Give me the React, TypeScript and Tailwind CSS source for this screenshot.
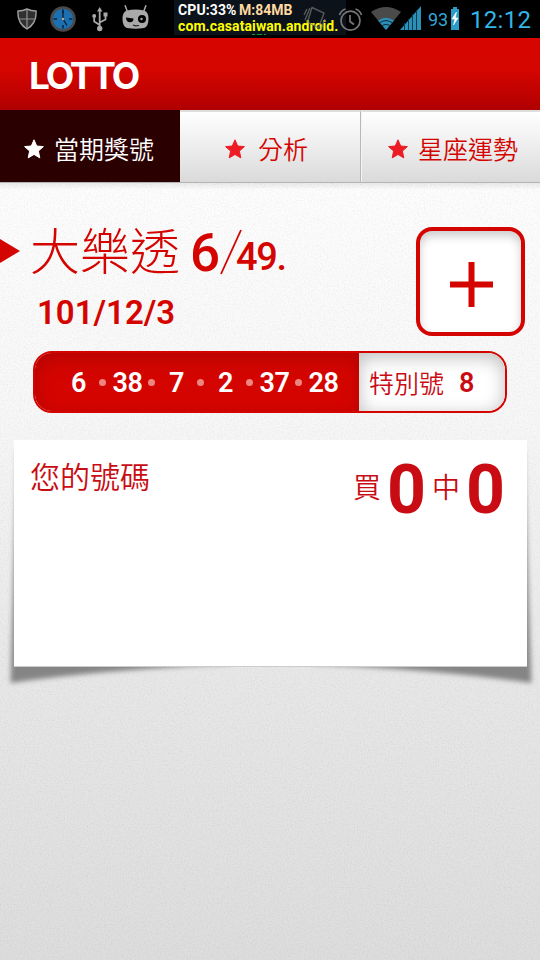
import React from 'react';

const CJK = "font-['Noto_Sans_CJK_TC','Noto_Sans',sans-serif]";
const ROBOTO = 'font-[Roboto,sans-serif]';

function Star({ className }: { className: string }) {
  return (
    <svg viewBox="0 0 20 20" className={className}>
      <path
        fill="currentColor"
        stroke="currentColor"
        strokeWidth="1"
        strokeLinejoin="round"
        d="M10 .8 12.7 7 19.4 7.6 14.4 12.1 15.8 18.9 10 15.4 4.2 18.9 5.6 12.1 .6 7.6 7.3 7Z"
      />
    </svg>
  );
}

function StatusBar() {
  return (
    <div className="relative flex h-[38px] items-start bg-black">
      <svg className="ml-[17px] mt-[8px] h-[22px] w-[20px] shrink-0" viewBox="0 0 20 22">
        <path d="M1 3Q6 3 10 1Q14 3 19 3Q20 15 10 21Q0 15 1 3Z" fill="#303030" stroke="#a0a0a0" strokeWidth="1.4" />
        <path d="M10 2V20M2 11H18" stroke="#909090" strokeWidth="1.2" />
      </svg>
      <svg className="ml-[13px] mt-[6px] h-[26px] w-[26px] shrink-0" viewBox="0 0 26 26">
        <circle cx="13" cy="13" r="11.5" fill="#1c70b0" stroke="#4a4a4a" strokeWidth="2.6" />
        <path d="M13 3.5V7M13 19V22.5M3.5 13H7M19 13H22.5" stroke="#0a2740" strokeWidth="1.6" />
        <path d="M13 4.500V13L17 19.500" stroke="#0b2033" strokeWidth="1.3" fill="none" />
        <circle cx="13" cy="13" r="1.2" fill="#b8a890" />
      </svg>
      <svg className="ml-[15px] mt-[7px] h-[25px] w-[18px] shrink-0" viewBox="0 0 18 25" fill="none" stroke="#a8a8a8" strokeWidth="1.8">
        <path d="M8.700 4V21M8.700 18L3.200 14.500V10M8.700 15.500L14.500 12.500V8" />
        <path d="M8.700 0L11.400 4.500H6Z" fill="#a8a8a8" stroke="none" />
        <circle cx="8.700" cy="21.500" r="2.700" fill="#a8a8a8" stroke="none" />
        <circle cx="3.200" cy="9" r="2" fill="#a8a8a8" stroke="none" />
        <path d="M12.500 5.500H16.500V9.500H12.500Z" fill="#a8a8a8" stroke="none" />
      </svg>
      <svg className="ml-[13px] mt-[5px] h-[25px] w-[27px] shrink-0" viewBox="0 0 27 25">
        <path d="M3 .3L5.500 7M24 .3L21.500 7" stroke="#aaa" strokeWidth="1.5" />
        <path d="M5 5.500Q13.500 3.500 22 5.500Q26.500 6.500 26.500 14Q26.500 21.500 22 23Q13.500 24.500 5 23Q.5 21.500 .5 14Q.5 6.500 5 5.500Z" fill="#aaa" />
        <path d="M4 12.500L11.500 13.500Q11.500 17.300 8 17.300Q4 17 4 12.500Z" fill="#000" />
        <circle cx="20" cy="14" r="4" fill="#000" />
        <circle cx="19.500" cy="14" r="1.200" fill="#aaa" />
        <path d="M11 20L13.500 20.800L17 20.500" stroke="#222" strokeWidth="1.200" fill="none" />
      </svg>
      <div className={`ml-[25px] h-[35px] w-[172px] shrink-0 overflow-hidden bg-[#0b1219] pl-[4px] text-[14px] font-bold leading-[16px] text-white ${ROBOTO}`}>
        <div className="whitespace-nowrap pt-[2px]">
          <span className="tracking-[.1px]">CPU:33%</span> <span className="-ml-[1px] text-[#ffd9a0]">M:84MB</span>
        </div>
        <div className="whitespace-nowrap tracking-[.1px] text-[#ffff00]">com.casataiwan.android.</div>
        <div className="ml-[74px] h-px w-[14px] bg-[linear-gradient(90deg,#0c9a35_0_3px,transparent_3px_5px,#0c9a35_5px_10px,transparent_10px_12px,#0c9a35_12px)]" />
      </div>
      <svg className="absolute left-[303px] top-[6px] h-[26px] w-[24px]" viewBox="0 0 24 26" fill="none" stroke="#777" strokeWidth="1.400" opacity=".7">
        <path d="M9 1.500L21 7L15.500 22L4.500 16Z" />
        <path d="M4 3L1 9M7 2L2 14M22 13L18 23" />
      </svg>
      <svg className="-ml-[8px] mt-[7px] h-[25px] w-[25px] shrink-0" viewBox="0 0 25 25" fill="none" stroke="#777" strokeWidth="1.700">
        <circle cx="12.500" cy="13.700" r="9.500" />
        <path d="M12 8V14.500L16 17.500M1.500 8Q3 3.500 7.500 2M17.500 2Q22 3.500 23.500 8" />
      </svg>
      <svg className="ml-[8px] mt-[7px] h-[23px] w-[30px] shrink-0" viewBox="0 0 30 23">
        <path d="M0 5Q15-5 30 5L15 23Z" fill="#4a4a4a" />
        <path d="M7 13.500Q15 8 23 13.500L15 23Z" fill="#2b8fb8" />
        <path d="M8.800 15.700Q15 11.500 21.200 15.700M11 18.500Q15 16 19 18.500" stroke="#0a2a38" strokeWidth="1" fill="none" />
      </svg>
      <svg className="-ml-px mt-[6px] h-[24px] w-[21px] shrink-0" viewBox="0 0 21 24">
        <path d="M0 24L21 0V24Z" fill="#2b8fb8" />
        <path d="M4.500 17V24M8.500 13V24M12.500 8V24M16.500 4V24" stroke="#0b3a4e" strokeWidth="1" />
      </svg>
      <div className={`ml-[7px] mt-[8px] w-[23px] shrink-0 text-[18px] leading-[24px] text-[#33a5d4] ${ROBOTO}`}>93</div>
      <svg className="mt-[7px] h-[23px] w-[8px] shrink-0" viewBox="0 0 8 23">
        <path d="M2 0H6V2H8V23H0V2H2Z" fill="#2b9cc8" />
        <path d="M5.500 5L1 12H4L2.500 18L7 11H4.300Z" fill="#fff" stroke="#fff" strokeWidth=".6" />
      </svg>
      <div className={`ml-[11px] mt-[5px] whitespace-nowrap text-[24px] leading-[30px] tracking-[.3px] text-[#33b5e5] ${ROBOTO}`}>12:12</div>
    </div>
  );
}

function Tabs() {
  return (
    <div className={`flex h-[73px] border-b border-[#b4b4b4] text-[25px] font-[350] leading-[36px] ${CJK}`}>
      <div className="flex w-[180px] bg-[#2a0000] pl-[24px] text-white">
        <Star className="mt-[29px] h-[20px] w-[20px]" />
        <span className="ml-[10px] mt-[20px] whitespace-nowrap">當期獎號</span>
      </div>
      <div className="flex w-[181px] border-r border-t-2 border-r-[#b8b8b8] border-t-[#dedede] bg-[linear-gradient(#fff,#ededed_50%,#dadada)] pl-[45px] text-[#d40500]">
        <Star className="mt-[27px] h-[20px] w-[20px] text-[#ec1c24]" />
        <span className="ml-[13px] mt-[18px] whitespace-nowrap">分析</span>
      </div>
      <div className="flex w-[179px] border-l border-t-2 border-l-[#f4f4f4] border-t-[#dedede] bg-[linear-gradient(#fff,#ededed_50%,#dadada)] pl-[26px] text-[#d40500]">
        <Star className="mt-[27px] h-[20px] w-[20px] text-[#ec1c24]" />
        <span className="ml-[10px] mt-[18px] whitespace-nowrap">星座運勢</span>
      </div>
    </div>
  );
}

const numbers = [6, 38, 7, 2, 37, 28];

function DrawResult() {
  return (
    <>
      <div className="flex h-[168px] pt-[44px] text-[#d40500]">
        <div className="mt-[12px] h-0 w-0 border-y-[12px] border-l-[20px] border-y-transparent border-l-[#d40500]" />
        <div className="w-[396px]">
          <div className="flex h-[64px] items-start whitespace-nowrap pl-[10px]">
            <span className={`-mt-[4px] w-[160px] text-[50px] font-light leading-[50px] ${CJK}`}>大樂透</span>
            <span className={`mt-px w-[28px] text-[53px] font-medium leading-[50px] ${ROBOTO}`}>6</span>
            <svg className="mt-[2px] h-[46px] w-[25px]" viewBox="0 0 25 46">
              <path d="M3 45L23 1" stroke="currentColor" strokeWidth="1.800" />
            </svg>
            <span className={`-ml-[7px] mt-[5px] text-[38px] font-medium leading-[50px] tracking-[-1.3px] ${ROBOTO}`}>49.</span>
          </div>
          <div className={`mt-[2px] pl-[17px] text-[33px] font-semibold leading-[40px] ${ROBOTO}`}>101/12/3</div>
        </div>
        <div className="flex h-[109px] w-[109px] items-center justify-center rounded-[16px] border-4 border-[#d40500] bg-white pt-[5px] shadow-[inset_0_5px_10px_#0003]">
          <svg className="h-[46px] w-[44px]" viewBox="0 0 44 46">
            <path d="M22.500 1V46M1 23.500H44" stroke="#d40500" strokeWidth="6" />
          </svg>
        </div>
      </div>
      <div className="mx-[33px] flex h-[62px] overflow-hidden rounded-[19px] border-2 border-[#d40500] bg-white">
        <div className={`-my-0.5 -ml-0.5 flex w-[326px] items-center rounded-l-[19px] bg-[#d40500] pl-[24px] text-[27px] font-semibold tracking-[-.3px] text-white shadow-[inset_2px_8px_18px_#7005,inset_0_-3px_10px_#7001] ${ROBOTO}`}>
          {numbers.map((n, i) => (
            <React.Fragment key={n}>
              {i > 0 && <span className="h-[7px] w-[7px] shrink-0 rounded-full bg-[#ed8581]" />}
              <span className="w-[42px] shrink-0 pl-px pt-[2px] text-center">{n}</span>
            </React.Fragment>
          ))}
        </div>
        <div className="flex flex-1 items-center rounded-r-[17px] bg-white pl-[10px] text-[#c90c14] shadow-[inset_0_4px_18px_#0004]">
          <span className={`whitespace-nowrap text-[25px] font-[350] leading-[36px] ${CJK}`}>特別號</span>
          <span className={`ml-[15px] pt-[2px] text-[27px] font-semibold ${ROBOTO}`}>8</span>
        </div>
      </div>
    </>
  );
}

function TicketCard() {
  return (
    <div className="relative ml-[14px] mt-[27px] h-[227px] w-[513px]">
      <svg className="absolute -left-[14px] top-0 h-[260px] w-[540px]" viewBox="0 0 540 260">
        <defs>
          <filter id="soft" x="-10%" y="-10%" width="120%" height="120%">
            <feGaussianBlur stdDeviation="2.8" />
          </filter>
        </defs>
        <g filter="url(#soft)" fill="#858585">
          <path d="M17 12L10.500 243Q100 230 230 224V12Z" />
          <path d="M524 12L531.500 243Q440 230 310 224V12Z" />
        </g>
      </svg>
      <div className="relative flex h-[227px] items-start border-b border-[#ccc] bg-white pl-[16px] text-[#c90c14]">
        <span className={`mt-[13px] w-[323px] whitespace-nowrap text-[30px] font-[350] leading-[44px] ${CJK}`}>您的號碼</span>
        <span className={`mt-[26px] w-[34px] text-[28px] font-[350] leading-[40px] ${CJK}`}>買</span>
        <span className={`mt-[15px] w-[45px] text-[68px] font-bold leading-[70px] ${ROBOTO}`}>0</span>
        <span className={`mt-[26px] w-[34px] text-[28px] font-[350] leading-[40px] ${CJK}`}>中</span>
        <span className={`mt-[15px] text-[68px] font-bold leading-[70px] ${ROBOTO}`}>0</span>
      </div>
    </div>
  );
}

export default function App() {
  return (
    <div className="h-[960px] w-[540px] overflow-hidden bg-black">
      <StatusBar />
      <header className="flex h-[72px] items-center bg-[linear-gradient(#d80500,#d40500_45%,#b00000)] pl-[29px] pt-[3px] text-[37px] font-bold tracking-[-3.2px] text-white font-[Inter,sans-serif]">
        <span>LOTTO</span>
      </header>
      <Tabs />
      <main className="relative h-[777px] bg-[linear-gradient(#00000014,transparent_7px),linear-gradient(#fdfdfd,#f7f7f7_30%,#e8e8e8_62%,#dddddd)]">
        <svg className="absolute inset-0 h-full w-full opacity-[.06]">
          <filter id="grain">
            <feTurbulence type="fractalNoise" baseFrequency=".7" numOctaves="2" seed="4" />
            <feColorMatrix values="0 0 0 0 0 0 0 0 0 0 0 0 0 0 0 1.8 0 0 0 -.75" />
          </filter>
          <rect width="100%" height="100%" filter="url(#grain)" />
        </svg>
        <div className="relative">
          <DrawResult />
          <TicketCard />
        </div>
      </main>
    </div>
  );
}
